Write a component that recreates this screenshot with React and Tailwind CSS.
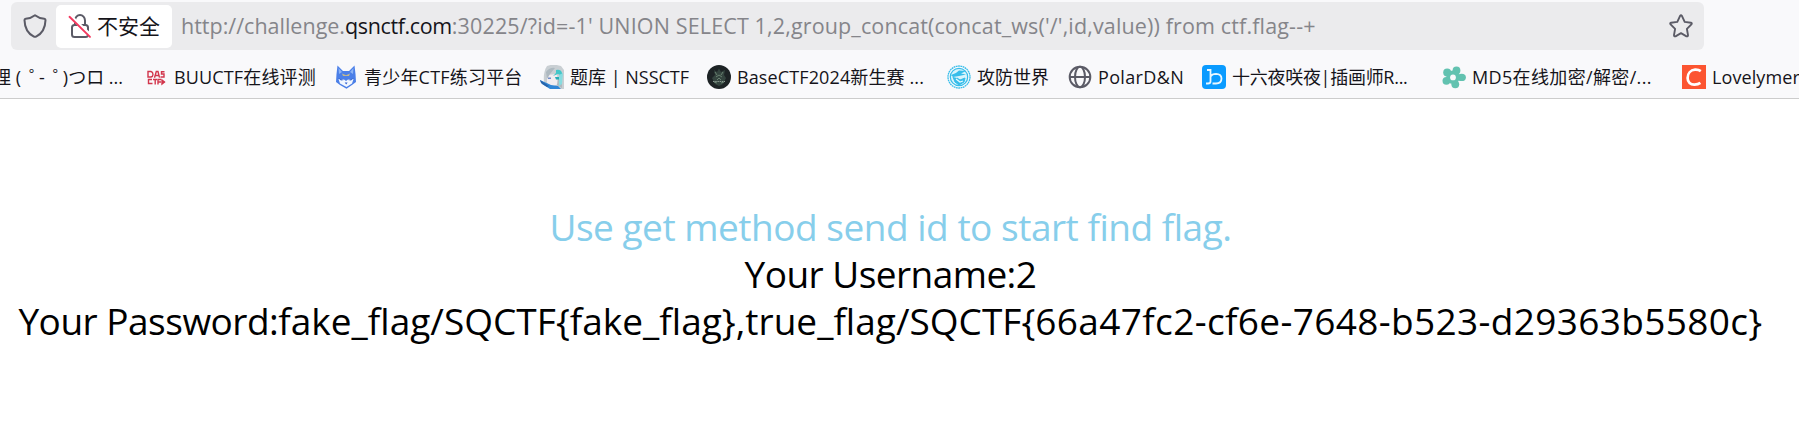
import React from "react";

function ShieldIcon() {
  return (
    <svg width="24" height="24" viewBox="0 0 24 24" fill="none" stroke="#5b5b66" strokeWidth="2" strokeLinejoin="round">
      <path d="M12 1.2C9.4 3.3 5.8 4.4 2.7 4.7C1.9 4.8 1.5 5.3 1.5 6.1C1.7 13.5 4.8 19.5 10.9 22.6Q12 23.1 13.1 22.6C19.2 19.5 22.3 13.5 22.5 6.1C22.5 5.3 22.1 4.8 21.3 4.7C18.2 4.4 14.6 3.3 12 1.2Z" />
    </svg>
  );
}

function InsecureLockIcon() {
  return (
    <svg width="24" height="26" viewBox="0 0 24 26" fill="none">
      <rect x="4" y="12" width="16" height="12" rx="2.5" stroke="#5b5b66" strokeWidth="2" />
      <path d="M7 12V7.500A5 5.500 0 0 1 17 7.500V12" stroke="#5b5b66" strokeWidth="2" />
      <path d="M2.500 3.200L23.500 23.200" stroke="#fff" strokeWidth="3.600" />
      <path d="M1.500 3.800L22 23.900" stroke="#f4395f" strokeWidth="1.900" strokeLinecap="round" />
    </svg>
  );
}

function StarIcon() {
  return (
    <svg width="24" height="24" viewBox="0 0 24 24" fill="none" stroke="#5b5b66" strokeWidth="1.900" strokeLinejoin="round">
      <path d="M11.100 1.800Q12 .7 12.900 1.800L15.700 7.900L21.900 8.700Q23.400 9.200 22.400 10.400L17.900 14.900L19 21.200Q19 22.800 17.500 22.300L12 19.200L6.500 22.300Q5 22.800 5 21.200L6.100 14.900L1.600 10.400Q.6 9.200 2.100 8.700L8.300 7.900Z" />
    </svg>
  );
}

function DasIcon() {
  return (
    <svg width="24" height="24" viewBox="0 0 24 24" fill="none" stroke="#d2364c" strokeWidth="1.400">
      <path d="M4 6.500V12H7Q9 11.500 9 9.500Q9 7 7 6.500Z" />
      <path d="M10.500 12.700L12.300 6.500H14L15.500 12.700M11.500 10.500H15" />
      <path d="M20.500 6.700H17.500V9H20V12H16.500" />
      <path d="M8 14.500H4.500V18.500H8.500M9 14.500H13M11.200 14.500V19.500M14 19.500V14.500H17M14 17H17" />
      <path d="M18 15L20.500 17L18 19ZM18 17H21" fill="#d2364c" />
    </svg>
  );
}

function WolfIcon() {
  return (
    <svg width="24" height="24" viewBox="0 0 24 24">
      <path d="M3.500 .5L9 6H15L20.500 .5L21.500 9L22 17L18 20L12.500 23.800L6 20L2 17L2.500 9Z" fill="#4b7fe8" />
      <path d="M4.500 3L8 7L5 9ZM19.500 3L16 7L19 9Z" fill="#8db4f5" />
      <path d="M4.500 14L10 14.500L12 16L14 14.500L19.500 14L18 18.500L12.500 22L6 18.500Z" fill="#f2f7ff" />
      <path d="M8 8.500L12 10.200L16 8.500L15 11H9Z" fill="#c5b98c" />
      <path d="M4 13L10 15L7 15.500ZM20 13L14 15L17 15.500Z" fill="#3867cf" />
      <path d="M10.700 17.500H13.600L12.200 19.400Z" fill="#315fcf" />
    </svg>
  );
}

function AvatarIcon() {
  return (
    <svg width="24" height="24" viewBox="0 0 24 24">
      <path d="M7 1Q13-1.500 21 1L24 5V24H11L4 17Q3 7 7 1Z" fill="#c9cfd3" />
      <path d="M7 10L17 9L18 19L12 22L7 18Z" fill="#f1edf0" />
      <path d="M6 7Q10 2 15 3L10 9L7 14ZM18 13L22 11V23L17 20Z" fill="#aeb9c0" />
      <path d="M16 5Q21 4 22 8V11L18 9L13 11L16 8Z" fill="#43c7c9" />
      <path d="M19 10L23 8L22 19L19 21Z" fill="#88dce0" />
      <path d="M15 12H19V14.500H16Z" fill="#25aeb7" />
      <path d="M8 12.500H11V14H8Z" fill="#718cc9" />
      <path d="M0 15L11 20L18 21L21 24H10L2 19Z" fill="#2f86d6" />
      <path d="M0 15L9 21L7 22L1 18Z" fill="#2763a9" />
    </svg>
  );
}

function DarkBadgeIcon() {
  return (
    <svg width="24" height="24" viewBox="0 0 24 24">
      <circle cx="12" cy="12" r="12" fill="#1d2325" />
      <path d="M7 5L10 7L12 3.500L14 7L18 5L17 10L19 13L16 19L12 21L8 19L5 13L8 10Z" fill="#34443f" />
      <path d="M8 7L10 10M16 7L14 10M9 12L12 10L15 12M10 15L12 13L14 15M7 17L10 18M17 17L14 18" stroke="#68806f" strokeWidth="1" fill="none" />
      <path d="M6 16.500H18" stroke="#8b9991" strokeWidth="1.200" strokeDasharray="1.500 .7" />
    </svg>
  );
}

function AttackWorldIcon() {
  return (
    <svg width="24" height="24" viewBox="0 0 24 24" fill="none" stroke="#37bdea">
      <circle cx="12" cy="12" r="11" strokeWidth="1.300" strokeDasharray="1.800 .5" />
      <circle cx="12" cy="12" r="8.700" fill="#d8f4fc" strokeWidth="1.200" />
      <path d="M4 10Q9 9 12 5.500L19 6L14 8.500L19 9.500L12 11L6 12Z" fill="#37bdea" stroke="none" />
      <path d="M6 12L8 17L12 20L17 17L18 13L13 15L10 13" fill="#37bdea" strokeWidth="1" />
      <path d="M9 14L13 17L16 16" stroke="#e9faff" strokeWidth="1.200" />
    </svg>
  );
}

function GlobeIcon() {
  return (
    <svg width="24" height="24" viewBox="0 0 24 24" fill="none" stroke="#5b5b66" strokeWidth="2">
      <circle cx="12" cy="12" r="10.300" />
      <ellipse cx="12" cy="12" rx="5" ry="10.300" />
      <path d="M2 12H22" />
    </svg>
  );
}

function BlueBIcon() {
  return (
    <svg width="24" height="24" viewBox="0 0 24 24" fill="none">
      <rect width="24" height="24" rx="4" fill="#0a9bff" />
      <path d="M5 5H8.500V16.500Q8.500 18.500 6 18.500H4M8.500 11.500Q10 8.800 14 8.800Q19.500 9 19.500 13.500Q19.500 18.500 14 18.500H10.500" stroke="#e9f7ff" strokeWidth="1.800" />
    </svg>
  );
}

function FlowerIcon() {
  return (
    <svg width="24" height="24" viewBox="0 0 24 24">
      <g fill="#62c2b0">
        <circle cx="14.500" cy="5.400" r="3.900" />
        <circle cx="5.200" cy="7.400" r="4" />
        <circle cx="4.400" cy="15.800" r="3.900" />
        <circle cx="13.300" cy="19.300" r="3.900" />
        <ellipse cx="19.600" cy="12.400" rx="4.300" ry="3.600" />
        <circle cx="11" cy="12.300" r="6.700" />
      </g>
      <circle cx="11" cy="12.400" r="2.900" fill="#f9f9fb" />
    </svg>
  );
}

function OrangeCIcon() {
  return (
    <svg width="24" height="24" viewBox="0 0 24 24" fill="none">
      <rect width="24" height="24" fill="#fc5531" />
      <path d="M18.800 6.200Q16.500 4.500 13 4.700C8.500 5 5.600 8.500 5.600 13C5.600 17.500 8.500 19.700 12.500 19.600Q16 19.500 18.400 17.900" stroke="#fff" strokeWidth="2.700" />
    </svg>
  );
}

const bookmarks = [
  { Icon: DasIcon, label: "BUUCTF在线评测", width: "w-[190px]", spacing: "tracking-[0.15px]" },
  { Icon: WolfIcon, label: "青少年CTF练习平台", width: "w-[206px]", spacing: "tracking-[0.2px]" },
  { Icon: AvatarIcon, label: "题库 | NSSCTF", width: "w-[167px]", spacing: "tracking-normal" },
  { Icon: DarkBadgeIcon, label: "BaseCTF2024新生赛 ...", width: "w-[240px]", spacing: "tracking-[0.12px]" },
  { Icon: AttackWorldIcon, label: "攻防世界", width: "w-[121px]", spacing: "tracking-normal" },
  { Icon: GlobeIcon, label: "PolarD&N", width: "w-[134px]", spacing: "tracking-[0.35px]" },
  { Icon: BlueBIcon, label: "十六夜咲夜|插画师R...", width: "w-[240px]", spacing: "tracking-[-0.28px]" },
  { Icon: FlowerIcon, label: "MD5在线加密/解密/...", width: "w-[240px]", spacing: "tracking-[0.35px]" },
  { Icon: OrangeCIcon, label: "Lovelymer", width: "w-[130px]", spacing: "tracking-[0.1px]" },
];

function AddressBar() {
  return (
    <div className="ml-[11px] flex h-12 w-[1693px] items-center rounded-md bg-[#ebebed] pr-[11px]">
      <div className="ml-3 flex w-[33px] shrink-0">
        <ShieldIcon />
      </div>
      <div className="flex h-[43px] w-[116px] shrink-0 items-center rounded-[5px] bg-white pl-3">
        <InsecureLockIcon />
        <span className="ml-[5px] whitespace-nowrap text-[21px] leading-none text-[#15141a]">不安全</span>
      </div>
      <div className="ml-[9px] flex flex-1 whitespace-pre text-[21.5px] leading-[30px] text-[#85858a]">
        <span>http://challenge.</span>
        <span className="tracking-[-0.38px] text-[#15141a]">qsnctf.com</span>
        <span className="tracking-[0.14px]">
          {":30225/?id=-1' UNION SELECT 1,2,group_concat(concat_ws('/',id,value)) from ctf.flag--+"}
        </span>
      </div>
      <StarIcon />
    </div>
  );
}

function BookmarksBar() {
  return (
    <div className="flex h-12 items-center overflow-hidden whitespace-nowrap pt-1.5 text-[18px] leading-6 text-[#15141a]">
      <div className="flex w-[123px] shrink-0 justify-end">
        <span>
          理 (<span className="-mr-2 pl-2">゜</span>-<span className="-mr-2 pl-2">゜</span>)つロ ...
        </span>
      </div>
      <div className="w-[21px] shrink-0" />
      {bookmarks.map(({ Icon, label, width, spacing }) => (
        <div key={label} className={`flex shrink-0 items-center gap-1.5 ${width} ${spacing}`}>
          <Icon />
          <span>{label}</span>
        </div>
      ))}
    </div>
  );
}

export default function App() {
  return (
    <div className="h-[437px] w-[1799px] overflow-hidden bg-white font-['Open_Sans','Noto_Sans_CJK_SC',sans-serif]">
      <header className="h-[99px] border-b border-[#cccccc] bg-[#f9f9fb] pt-0.5">
        <AddressBar />
        <BookmarksBar />
      </header>
      <main className="flex w-[1781px] flex-col items-center whitespace-nowrap pt-[104px] text-[37px] leading-[47px] text-black">
        <p className="tracking-[-0.48px] text-[#87ceeb]">Use get method send id to start find flag.</p>
        <p className="tracking-[-0.55px]">Your Username:2</p>
        <p>
          <span className="tracking-[-0.5px]">Your Password:</span>
          <span className="tracking-[0.02px]">{"fake_flag/SQCTF{fake_flag},true_flag/SQCTF{"}</span>
          <span className="tracking-[0.35px]">{"66a47fc2-cf6e-7648-b523-d29363b5580c}"}</span>
        </p>
      </main>
    </div>
  );
}
